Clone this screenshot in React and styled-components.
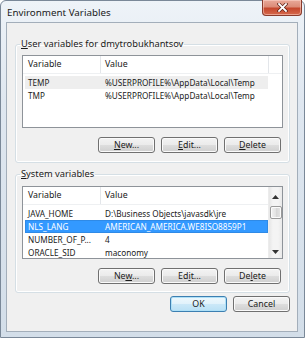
import React from "react";
import styled, { createGlobalStyle, css } from "styled-components";

const GlobalStyle = createGlobalStyle`
  html, body { margin: 0; padding: 0; }
  body {
    width: 305px; height: 338px; overflow: hidden; background: #ffffff;
    font-family: "Noto Sans", "DejaVu Sans", sans-serif;
  }
`;

const Window = styled.div`
  width: 305px; height: 338px; box-sizing: border-box;
  border: 1px solid #7a8898;
  border-radius: 6px 6px 0 0;
  background: linear-gradient(to bottom, #eef3f8 0%, #dfe7f0 30%, #d3dee9 100%);
  display: flex; flex-direction: column;
  padding: 0 6px 5px 5px;
`;

const TitleBar = styled.div`
  height: 21px; flex-shrink: 0;
  display: flex; align-items: flex-start; justify-content: space-between;
`;

const Title = styled.div`
  font-size: 9.8px; line-height: 23px; color: #1a1a1a; padding-left: 1px;
`;

const CloseButton = styled.div`
  width: 40px; height: 16px; box-sizing: border-box;
  margin-right: -4px; margin-top: -1px;
  border: 1px solid #8a3b2c; border-top: none;
  border-radius: 0 0 4px 4px;
  background: linear-gradient(to bottom, #e9a99a 0%, #dc8c78 45%, #c5472d 55%, #d66a4d 100%);
  box-shadow: inset 0 0 0 1px rgba(255, 220, 210, 0.5);
  display: flex; align-items: center; justify-content: center;
`;

const Client = styled.div`
  flex: 1; box-sizing: border-box;
  background: #f0f0f0;
  border: 1px solid #a3aeba;
  display: flex; flex-direction: column;
  padding: 0 7px 0 8px;
`;

const Group = styled.fieldset`
  margin: ${(p) => p.$top}px 0 0 0;
  padding: ${(p) => p.$padTop}px 6px ${(p) => p.$padBottom}px 6px;
  border: 1px solid #d5dfe5;
  border-radius: 3px;
  box-shadow: inset 0 0 0 1px #ffffff;
  min-inline-size: 0;
`;

const Caption = styled.legend`
  font-size: 9.3px; line-height: 10px; color: #1a1a1a;
  padding: 0 1px; margin-left: -2px;
`;

const Key = styled.span`
  text-decoration: underline;
  text-underline-offset: 1px;
`;

const ListBox = styled.div`
  height: 73px; box-sizing: border-box;
  border: 1px solid #8e9399;
  background: #ffffff;
  display: flex; overflow: hidden;
`;

const ListMain = styled.div`
  flex: 1; display: flex; flex-direction: column; min-width: 0;
`;

const Header = styled.div`
  height: 18px; flex-shrink: 0; display: flex;
  border-bottom: 1px solid #eef0f2;
  box-sizing: border-box;
`;

const HeaderCell = styled.div`
  width: ${(p) => p.$w}px; flex-shrink: 0; box-sizing: border-box;
  border-right: 1px solid #e3e6ea;
  padding-left: ${(p) => p.$pad}px;
  font-size: 8.8px; line-height: 17px; color: #1a1a1a;
  white-space: nowrap;
`;

const HeaderFill = styled.div`flex: 1;`;

const Rows = styled.div`
  padding-top: ${(p) => p.$pt}px;
  display: flex; flex-direction: column;
`;

const Row = styled.div`
  width: 243px; height: 13px; margin-left: 2px; flex-shrink: 0;
  display: flex; box-sizing: border-box;
  color: #1a1a1a;
  ${(p) => p.$state === "hover" && css`background: #eeeeee;`}
  ${(p) => p.$state === "selected" && css`
    background: #3399ff; color: #ffffff;
    box-shadow: inset 0 0 0 1px #2f8ae6;
  `}
`;

const Cell = styled.div`
  width: ${(p) => p.$w}px; flex-shrink: 0; box-sizing: border-box;
  padding-left: ${(p) => p.$pad}px;
  font-size: 8.2px; line-height: 13px; white-space: nowrap; overflow: hidden;
`;

const ScrollBar = styled.div`
  width: 14px; flex-shrink: 0; box-sizing: border-box;
  background: linear-gradient(to right, #e6e6e6, #f4f4f4 30%, #f4f4f4 70%, #e9e9e9);
  border-left: 1px solid #ececec;
  display: flex; flex-direction: column; align-items: center;
`;

const Arrow = styled.div`
  height: ${(p) => p.$h}px; width: 100%; flex-shrink: 0;
  display: flex; align-items: center; justify-content: center;
`;

const Thumb = styled.div`
  width: 12px; height: 13px; box-sizing: border-box;
  border: 1px solid #9a9a9a; border-radius: 2px;
  background: linear-gradient(to right, #f3f3f3, #e2e2e2 50%, #d6d6d6 50%, #e6e6e6);
  box-shadow: inset 0 0 0 1px #fbfbfb;
`;

const Track = styled.div`flex: 1;`;

const ButtonRow = styled.div`
  display: flex; justify-content: flex-end; gap: ${(p) => p.$gap}px;
  margin-top: ${(p) => p.$top}px;
  padding-right: ${(p) => p.$right}px;
`;

const Button = styled.div`
  width: 57px; height: 16px; box-sizing: border-box;
  border: 1px solid #707070; border-radius: 3px;
  background: linear-gradient(to bottom, #f3f3f3 0%, #ebebeb 48%, #dddddd 52%, #cfcfcf 100%);
  box-shadow: inset 0 0 0 1px #fafafa;
  font-size: 8.8px; line-height: 14px; text-align: center; color: #1a1a1a;
  ${(p) => p.$default && css`
    border-color: #3c7fb1;
    background: linear-gradient(to bottom, #eef8fd 0%, #e1f2fb 48%, #cbe8f8 52%, #b9e0f5 100%);
    box-shadow: inset 0 0 0 1px #aee0f7;
  `}
`;

const UpArrow = () => (
  <svg width="7" height="4" viewBox="0 0 7 4"><path d="M0 4 L3.5 0 L7 4 Z" fill="#333" /></svg>
);
const DownArrow = () => (
  <svg width="7" height="4" viewBox="0 0 7 4"><path d="M0 0 L3.5 4 L7 0 Z" fill="#333" /></svg>
);

const CloseX = () => (
  <svg width="11" height="9" viewBox="0 0 11 9">
    <path d="M2 1 L9 8 M9 1 L2 8" stroke="#5a1e14" strokeWidth="3.2" strokeLinecap="square" />
    <path d="M2 1 L9 8 M9 1 L2 8" stroke="#ffffff" strokeWidth="1.8" strokeLinecap="square" />
  </svg>
);

const userVars = [
  { name: "TEMP", value: "%USERPROFILE%\\AppData\\Local\\Temp", state: "hover" },
  { name: "TMP", value: "%USERPROFILE%\\AppData\\Local\\Temp" },
];

const systemVars = [
  { name: "JAVA_HOME", value: "D:\\Business Objects\\javasdk\\jre" },
  { name: "NLS_LANG", value: "AMERICAN_AMERICA.WE8ISO8859P1", state: "selected" },
  { name: "NUMBER_OF_P...", value: "4" },
  { name: "ORACLE_SID", value: "maconomy" },
];

const VarList = ({ items, scroll }) => (
  <ListBox>
    <ListMain>
      <Header>
        <HeaderCell $w={78} $pad={5}>Variable</HeaderCell>
        <HeaderCell $w={168} $pad={4}>Value</HeaderCell>
        {!scroll && <HeaderFill />}
      </Header>
      <Rows $pt={2}>
        {items.map((it) => (
          <Row key={it.name} $state={it.state}>
            <Cell $w={76} $pad={3}>{it.name}</Cell>
            <Cell $w={167} $pad={4}>{it.value}</Cell>
          </Row>
        ))}
      </Rows>
    </ListMain>
    {scroll && (
      <ScrollBar>
        <Arrow $h={19}><UpArrow /></Arrow>
        <Thumb />
        <Track />
        <Arrow $h={13}><DownArrow /></Arrow>
      </ScrollBar>
    )}
  </ListBox>
);

export default function App() {
  return (
    <>
      <GlobalStyle />
      <Window>
        <TitleBar>
          <Title>Environment Variables</Title>
          <CloseButton><CloseX /></CloseButton>
        </TitleBar>
        <Client>
          <Group $top={16} $padTop={6} $padBottom={9}>
            <Caption><Key>U</Key>ser variables for dmytrobukhantsov</Caption>
            <VarList items={userVars} />
            <ButtonRow $gap={6} $top={9} $right={2}>
              <Button><Key>N</Key>ew...</Button>
              <Button><Key>E</Key>dit...</Button>
              <Button><Key>D</Key>elete</Button>
            </ButtonRow>
          </Group>
          <Group $top={6} $padTop={7} $padBottom={8}>
            <Caption><Key>S</Key>ystem variables</Caption>
            <VarList items={systemVars} scroll />
            <ButtonRow $gap={6} $top={9} $right={2}>
              <Button>Ne<Key>w</Key>...</Button>
              <Button>Ed<Key>i</Key>t...</Button>
              <Button>De<Key>l</Key>ete</Button>
            </ButtonRow>
          </Group>
          <ButtonRow $gap={6} $top={3} $right={0}>
            <Button $default>OK</Button>
            <Button>Cancel</Button>
          </ButtonRow>
        </Client>
      </Window>
    </>
  );
}
